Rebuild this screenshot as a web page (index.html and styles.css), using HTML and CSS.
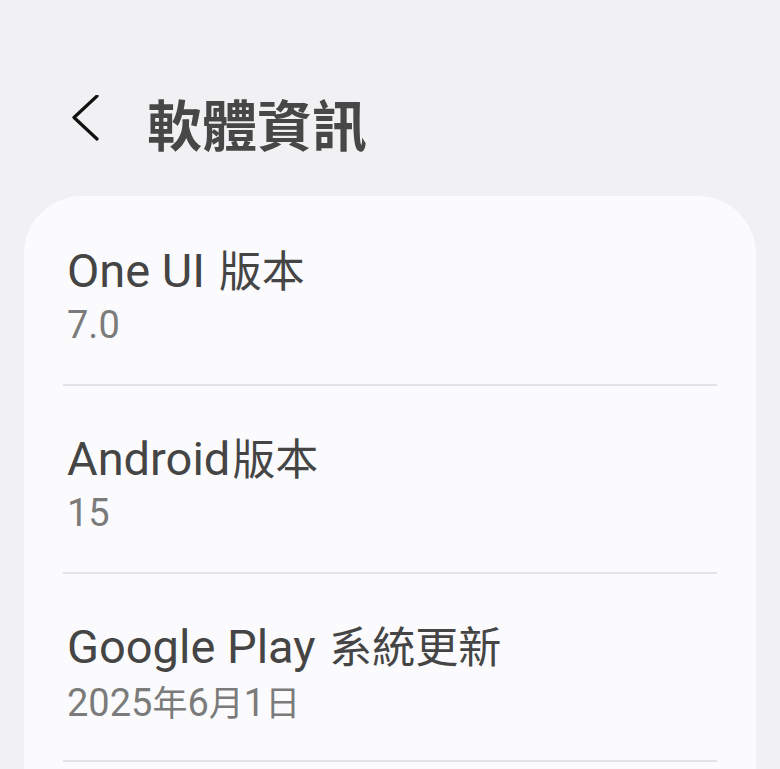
FILE: index.html
```html
<!DOCTYPE html>
<html>
<head>
    <meta charset="utf-8">
    <title>軟體資訊</title>
    <link rel="stylesheet" href="styles.css">
</head>
<body>
    <div class="header">
        <svg class="back" width="40" height="50" viewBox="0 0 40 50">
            <path d="M33 1 L10 22.5 L33 44" fill="none" stroke="#111" stroke-width="3.2" stroke-linecap="round" stroke-linejoin="round"/>
        </svg>
        <h1>軟體資訊</h1>
    </div>
    <div class="card">
        <div class="row">
            <div class="name">One UI <span class="zh">版本</span></div>
            <div class="value">7.0</div>
        </div>
        <div class="row">
            <div class="name">Android<span class="zh">版本</span></div>
            <div class="value">15</div>
        </div>
        <div class="row">
            <div class="name">Google Play <span class="zh">系統更新</span></div>
            <div class="value">2025<span class="zh">年</span>6<span class="zh">月</span>1<span class="zh">日</span></div>
        </div>
    </div>
</body>
</html>
```

FILE: styles.css
```css
body { margin: 0; background-color: #f1f1f3; font-family: Roboto, "Noto Sans CJK TC", sans-serif; overflow: hidden; height: 769px; }
.header { display: flex; align-items: center; height: 100px; margin-top: 72px; padding-left: 64px; }
.back { display: block; margin-top: -4px; }
h1 { margin: 0 0 0 43px; font-family: "Noto Sans CJK TC", sans-serif; font-size: 55px; font-weight: 700; color: #474747; line-height: 1; }
.card { margin: 24px 24px 0; padding-top: 2px; background: #fbfbfd; border-radius: 58px 58px 0 0; height: 600px; }
.row { margin: 0 39px; padding: 42px 4px 34px; border-bottom: 2px solid #e3e3e5; }
.name { font-size: 47px; line-height: 56px; height: 56px; color: #454545; white-space: nowrap; }
.name .zh { font-family: "Noto Sans CJK TC", sans-serif; font-size: 43px; margin-left: 2px; }
.value { margin-top: 4px; font-size: 38px; line-height: 50px; height: 50px; color: #7b7b7b; white-space: nowrap; }
.value .zh { font-family: "Noto Sans CJK TC", sans-serif; font-size: 35px; }
```
